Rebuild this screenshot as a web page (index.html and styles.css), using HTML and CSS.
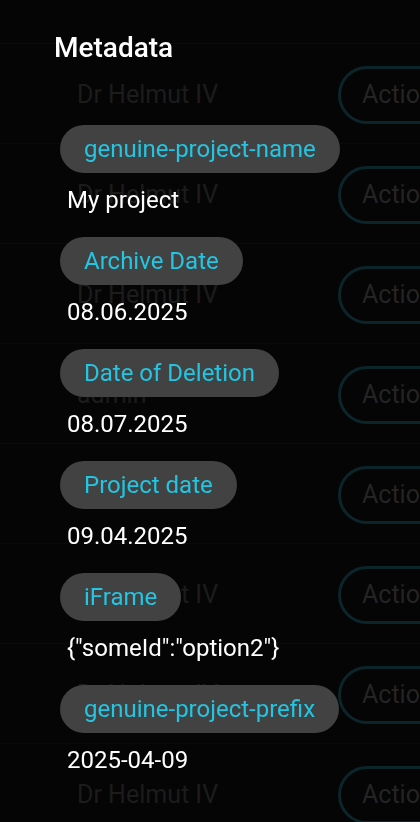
FILE: index.html
```html
<!DOCTYPE html>
<html lang="en">
<head>
<meta charset="utf-8">
<title>Metadata</title>
<link rel="stylesheet" href="styles.css">
</head>
<body>
<div class="table">
  <div class="row"><span class="name">Dr Helmut IV</span><span class="action">Actions</span></div>
  <div class="row"><span class="name">Dr Helmut IV</span><span class="action">Actions</span></div>
  <div class="row"><span class="name">Dr Helmut IV</span><span class="action">Actions</span></div>
  <div class="row"><span class="name">admin</span><span class="action">Actions</span></div>
  <div class="row"><span class="name">Dr Helmut IV</span><span class="action">Actions</span></div>
  <div class="row"><span class="name">Dr Helmut IV</span><span class="action">Actions</span></div>
  <div class="row"><span class="name">Dr Helmut IV</span><span class="action">Actions</span></div>
  <div class="row"><span class="name">Dr Helmut IV</span><span class="action">Actions</span></div>
</div>
<div class="dialog">
  <h2 class="title">Metadata</h2>
  <div class="item"><span class="chip">genuine-project-name</span><div class="value">My project</div></div>
  <div class="item"><span class="chip">Archive Date</span><div class="value">08.06.2025</div></div>
  <div class="item"><span class="chip">Date of Deletion</span><div class="value">08.07.2025</div></div>
  <div class="item"><span class="chip">Project date</span><div class="value">09.04.2025</div></div>
  <div class="item"><span class="chip">iFrame</span><div class="value">{"someId":"option2"}</div></div>
  <div class="item"><span class="chip">genuine-project-prefix</span><div class="value">2025-04-09</div></div>
</div>
</body>
</html>
```
FILE: styles.css
```css
html, body {
  margin: 0;
  padding: 0;
  background: #050505;
  font-family: Roboto, "Noto Sans", sans-serif;
  overflow: hidden;
  height: 822px;
}
.table {
  padding-top: 43px;
}
.row {
  display: flex;
  align-items: center;
  height: 100px;
  box-sizing: border-box;
  border-top: 1px solid #0a0a0a;
  padding-left: 77px;
  padding-top: 2px;
}
.name {
  width: 261px;
  flex: none;
  font-size: 25px;
  color: #1c1c1c;
}
.action {
  flex: none;
  box-sizing: border-box;
  height: 58px;
  width: 150px;
  border: 3px solid #0b252b;
  border-radius: 29px;
  padding-left: 21px;
  display: flex;
  align-items: center;
  font-size: 25px;
  color: #242424;
  white-space: nowrap;
}
.dialog {
  position: fixed;
  inset: 0;
  padding: 32px 0 0 60px;
}
.title {
  margin: 0 0 61px -6px;
  font-size: 28px;
  line-height: 32px;
  font-weight: 500;
  color: #ffffff;
}
.item {
  margin-bottom: 23px;
}
.chip {
  display: inline-flex;
  align-items: center;
  height: 48px;
  padding: 0 24px;
  border-radius: 24px;
  background: #424242;
  color: #22c6e2;
  font-size: 24px;
}
.value {
  margin-top: 13px;
  padding-left: 7px;
  font-size: 24px;
  line-height: 28px;
  color: #ffffff;
}
```
